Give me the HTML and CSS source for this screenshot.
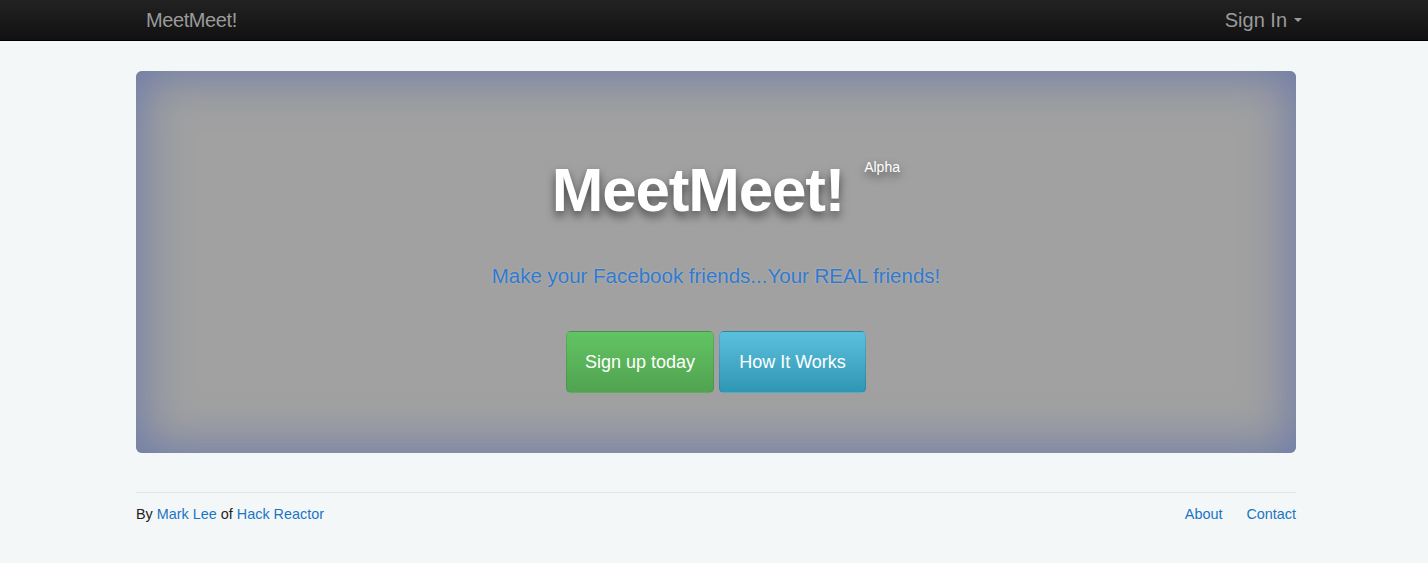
FILE: index.html
```html
<!DOCTYPE html>
<html lang="en">
<head>
<meta charset="utf-8">
<title>MeetMeet!</title>
<link rel="stylesheet" href="styles.css">
</head>
<body>
<header class="navbar">
  <div class="container nav-inner">
    <a class="brand" href="#">MeetMeet!</a>
    <a class="signin" href="#">Sign In <span class="caret"></span></a>
  </div>
</header>
<main class="container">
  <section class="jumbotron">
    <h1 class="title">MeetMeet!<sup class="alpha">Alpha</sup></h1>
    <p class="lead">Make your Facebook friends...Your REAL friends!</p>
    <div class="actions">
      <a class="btn btn-success" href="#">Sign up today</a>
      <a class="btn btn-info" href="#">How It Works</a>
    </div>
  </section>
  <footer class="footer">
    <p class="credit">By <a href="#">Mark Lee</a> of <a href="#">Hack Reactor</a></p>
    <nav class="footer-links">
      <a href="#">About</a>
      <a href="#">Contact</a>
    </nav>
  </footer>
</main>
</body>
</html>
```

FILE: styles.css
```css
* { box-sizing: border-box; }
html, body { margin: 0; padding: 0; }
body {
  background: #f4f7f7;
  font-family: "Liberation Sans", Arial, sans-serif;
  font-size: 14px;
  color: #333;
  padding-left: 4px;
}
a { text-decoration: none; }
.container {
  width: 1160px;
  margin: 0 auto;
}
.navbar {
  height: 41px;
  background: linear-gradient(#222222, #111111);
  border-bottom: 1px solid #000;
  margin-left: -4px;
}
.nav-inner {
  display: flex;
  justify-content: space-between;
  align-items: center;
  height: 40px;
  position: relative;
  left: 2px;
}
.brand {
  color: #9a9a9a;
  font-size: 20px;
  padding-left: 10px;
  letter-spacing: -0.4px;
}
.signin {
  color: #9a9a9a;
  font-size: 20px;
  margin-right: -6px;
  display: flex;
  align-items: center;
}
.caret {
  display: inline-block;
  width: 0;
  height: 0;
  margin-left: 7px;
  border-top: 4px solid #9a9a9a;
  border-left: 4px solid transparent;
  border-right: 4px solid transparent;
}
.jumbotron {
  margin-top: 30px;
  height: 382px;
  border-radius: 6px;
  background: #a1a1a1;
  box-shadow: inset 0 0 50px 2px #6877a8;
  display: flex;
  flex-direction: column;
  align-items: center;
  padding-top: 84px;
}
.title {
  margin: 0;
  font-size: 62px;
  line-height: 70px;
  font-weight: bold;
  letter-spacing: -1.2px;
  color: #fff;
  text-shadow: 0 5px 10px rgba(0,0,0,0.55);
  position: relative;
  left: -18px;
}
.alpha {
  position: absolute;
  left: 100%;
  top: 4px;
  margin-left: 20px;
  font-size: 14px;
  font-weight: normal;
  letter-spacing: 0;
  line-height: 16px;
  text-shadow: 0 4px 8px rgba(0,0,0,0.55);
}
.lead {
  margin: 39px 0 0;
  font-size: 20.5px;
  line-height: 24px;
  color: #2f7ad0;
  text-shadow: 0 0 2px rgba(255,255,255,0.3);
}
.actions {
  display: flex;
  gap: 5px;
  margin-top: 43px;
}
.btn {
  display: block;
  height: 62px;
  line-height: 60px;
  padding: 0;
  text-align: center;
  white-space: nowrap;
  font-size: 18px;
  color: #fff;
  border-radius: 5px;
  border: 1px solid rgba(0,0,0,0.1);
}
.btn-success {
  width: 148px;
  background: linear-gradient(#62c462, #51a351);
}
.btn-info {
  width: 147px;
  background: linear-gradient(#5bc0de, #2f96b4);
}
.footer {
  margin-top: 39px;
  border-top: 1px solid #e3e5e5;
  display: flex;
  justify-content: space-between;
  padding-top: 13px;
  font-size: 14.4px;
}
.credit { margin: 0; color: #222; line-height: 16px; }
.footer a { color: #1b75c4; }
.footer-links { display: flex; gap: 24px; line-height: 16px; }
```
